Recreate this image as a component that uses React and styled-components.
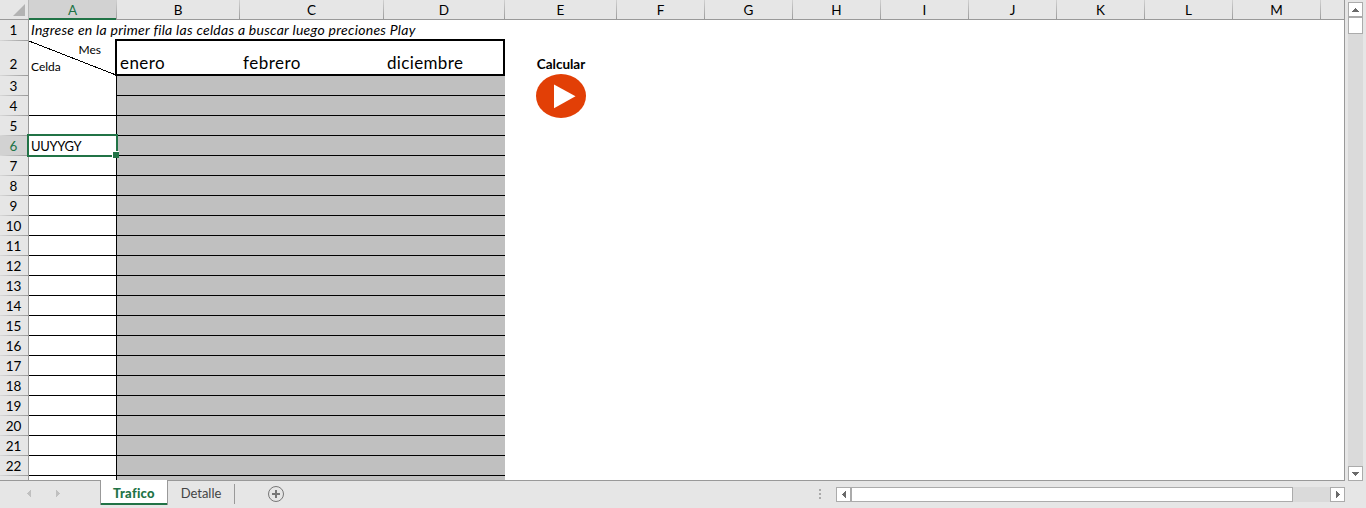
import React from 'react';
import styled, { createGlobalStyle, css } from 'styled-components';

const Global = createGlobalStyle`
  * { box-sizing: border-box; }
  body { margin: 0; background: #e6e6e6; overflow: hidden; }
`;

const Workbook = styled.div`
  display: grid;
  grid-template: 481px 27px / 1345px 21px;
  width: 1366px;
  height: 508px;
  background: #e6e6e6;
  font: 13.5px Lato, Carlito, "Open Sans", sans-serif;
  font-variant-ligatures: none;
  color: #000;
`;

const Sheet = styled.main`
  overflow: hidden;
  background: #fff;
  border-right: 1px solid #999;
  border-bottom: 1px solid #999;
`;

const HeaderRow = styled.div`
  display: flex;
  height: 20px;
  background: #e6e6e6;
  border-bottom: 1px solid #999;
`;

const Corner = styled.div`
  width: 29px;
  height: 19px;
  padding: 4px 0 0 13px;
  border-right: 1px solid #b8b8b8;
  svg { display: block; }
`;

const ColumnHeader = styled.div`
  width: ${(p) => p.$width}px;
  height: ${(p) => (p.$active ? 20 : 19)}px;
  flex: none;
  text-align: center;
  line-height: 20px;
  border-right: 1px solid;
  border-image: linear-gradient(#d4d4d4, #999) 1;
  ${(p) => p.$active && css`
    background: linear-gradient(#217346, #217346) bottom / 100% 2px no-repeat #d2d2d2;
    color: #217346;
  `}
`;

const Row = styled.div`
  display: flex;
  height: ${(p) => p.$height}px;
`;

const RowHeader = styled.div`
  width: 29px;
  flex: none;
  display: flex;
  align-items: flex-end;
  justify-content: center;
  padding: 0 1px ${(p) => p.$bottom || 1}px 0;
  line-height: 18px;
  background: linear-gradient(90deg, #d8d8d8, #999) bottom / 100% 1px no-repeat ${(p) => (p.$active ? '#d2d2d2' : '#e6e6e6')};
  color: ${(p) => (p.$active ? '#217346' : '#000')};
  border-right: 1px solid #999;
`;

const Note = styled.div`
  padding-left: 2px;
  line-height: 19px;
  font-style: italic;
  font-size: 14px;
  letter-spacing: 0.28px;
  white-space: nowrap;
`;

const KeyCell = styled.div`
  position: relative;
  width: 88px;
  flex: none;
  padding-left: 2px;
  line-height: 21px;
  font-size: 13px;
  letter-spacing: -0.35px;
  border-right: 1px solid #000;
  border-bottom: ${(p) => (p.$open ? 0 : 1)}px solid #000;
`;

const ShadedCell = styled.div`
  width: 388px;
  background: #c0c0c0;
  border-bottom: 1px solid #000;
`;

const SplitCell = styled.div`
  position: relative;
  width: 86px;
  flex: none;
  font-size: 12px;
  line-height: 17px;
  padding: 0 14px 0 2px;
  svg { position: absolute; left: 0; top: 0; }
`;

const SplitLabel = styled.div`
  text-align: ${(p) => p.$align};
`;

const MonthBand = styled.div`
  display: flex;
  align-items: flex-end;
  width: 390px;
  height: 37px;
  margin-top: -2px;
  flex: none;
  border: 2px solid #000;
  background: #fff;
`;

const Month = styled.div`
  width: ${(p) => p.$width}px;
  padding: 0 0 1px 3px;
  font-size: 17px;
  line-height: 20px;
  letter-spacing: ${(p) => p.$spacing}px;
`;

const ActionCell = styled.div`
  position: relative;
  width: 112px;
  text-align: center;
  font-weight: 700;
  font-size: 13.5px;
  line-height: 18px;
  padding-top: 14px;
  svg { position: absolute; left: 31px; top: 33px; }
`;

const Selection = styled.div`
  position: absolute;
  left: -2px;
  top: -2px;
  width: 91px;
  height: 23px;
  border: 2px solid #217346;
  z-index: 2;
  &::after {
    content: '';
    position: absolute;
    right: -3px;
    bottom: -3px;
    width: 6px;
    height: 6px;
    background: #217346;
    border: solid #fff;
    border-width: 1px 0 0 1px;
  }
`;

const VerticalScroll = styled.aside`
  display: flex;
  flex-direction: column;
  width: 15px;
  height: 479px;
  margin: 2px 0 0 3px;
  background: #dadada;
`;

const ScrollButton = styled.button`
  display: grid;
  place-items: center;
  flex: none;
  width: 15px;
  height: 15px;
  padding: 0;
  background: #fff;
  border: 1px solid #ababab;
`;

const VerticalThumb = styled.div`
  height: 17px;
  margin-bottom: auto;
  background: #fff;
  border: 1px solid #ababab;
  flex: none;
`;

const Footer = styled.footer`
  grid-column: 1 / -1;
  display: flex;
  height: 27px;
`;

const SheetNav = styled.div`
  display: flex;
  width: 100px;
  padding: 9px 0 0 27px;
  gap: 25px;
`;

const Tab = styled.div`
  width: ${(p) => (p.$active ? 68 : 67)}px;
  height: ${(p) => (p.$active ? 25 : 20)}px;
  font-size: 13px;
  text-align: center;
  color: #444;
  ${(p) => p.$active ? css`
    margin-top: -1px;
    line-height: 27px;
    background: #fff;
    color: #217346;
    font-weight: 900;
    letter-spacing: 0.3px;
    border: solid #999;
    border-width: 0 1px;
    box-shadow: inset 0 -2px #217346;
  ` : css`
    margin-top: 3px;
    line-height: 19px;
    border-right: 1px solid #999;
  `}
`;

const AddSheet = styled.div`
  width: 18px;
  margin: 4px 0 0 32px;
`;

const Splitter = styled.div`
  display: flex;
  flex-direction: column;
  gap: 2px;
  margin: 8px 15px 0 auto;
`;

const Dot = styled.i`
  width: 2px;
  height: 2px;
  background: #aaa;
`;

const HorizontalScroll = styled.div`
  display: flex;
  width: 509px;
  height: 15px;
  margin: 6px 21px 0 0;
  background: #dadada;
  justify-content: space-between;
`;

const HorizontalThumb = styled.div`
  width: 442px;
  margin: 0 auto 0 0;
  background: #fff;
  border: 1px solid #ababab;
`;

const arrowShapes = {
  up: [7, 4, 'M3 0h1v1h1v1h1v1h1v1H0V3h1V2h1V1h1z'],
  down: [7, 4, 'M0 0h7v1H6v1H5v1H4v1H3V3H2V2H1V1H0z'],
  left: [4, 7, 'M4 0v7H3V6H2V5H1V4H0V3h1V2h1V1h1V0z'],
  right: [4, 7, 'M0 0v7h1V6h1V5h1V4h1V3H3V2H2V1H1V0z'],
};

function Arrow({ dir, color = '#6a6a6a' }) {
  const [w, h, d] = arrowShapes[dir];
  return <svg width={w} height={h} viewBox={`0 0 ${w} ${h}`}><path d={d} fill={color} /></svg>;
}

const columns = [
  ['A', 88], ['B', 123], ['C', 144], ['D', 121], ['E', 112], ['F', 88], ['G', 88],
  ['H', 88], ['I', 88], ['J', 88], ['K', 88], ['L', 88], ['M', 88],
];
const dataRows = Array.from({ length: 20 }, (_, i) => i + 3);

export default function App() {
  return (
    <>
      <Global />
      <Workbook>
        <Sheet>
          <HeaderRow>
            <Corner>
              <svg width="12" height="12"><path d="M12 0v12H0z" fill="#b3b3b3" /></svg>
            </Corner>
            {columns.map(([name, width]) => (
              <ColumnHeader key={name} $width={width} $active={name === 'A'}>{name}</ColumnHeader>
            ))}
          </HeaderRow>
          <Row $height={21}>
            <RowHeader $bottom={2}>1</RowHeader>
            <Note>Ingrese en la primer fila las celdas a buscar luego preciones Play</Note>
          </Row>
          <Row $height={35}>
            <RowHeader $bottom={3}>2</RowHeader>
            <SplitCell>
              <svg width="87" height="35"><path d="M0 0L87 34" stroke="#000" shapeRendering="crispEdges" /></svg>
              <SplitLabel $align="right">Mes</SplitLabel>
              <SplitLabel $align="left">Celda</SplitLabel>
            </SplitCell>
            <MonthBand>
              <Month $width={123} $spacing={0.4}>enero</Month>
              <Month $width={144} $spacing={0.5}>febrero</Month>
              <Month $width={119} $spacing={0.35}>diciembre</Month>
            </MonthBand>
            <ActionCell>
              Calcular
              <svg width="50" height="44" viewBox="0 0 50 44">
                <ellipse cx="25" cy="22" rx="25" ry="22" fill="#e23f06" />
                <path d="M18 10.5L39.5 22.3L18 34.2z" fill="#fff" />
              </svg>
            </ActionCell>
          </Row>
          {dataRows.map((n) => (
            <Row key={n} $height={20}>
              <RowHeader $active={n === 6}>{n}</RowHeader>
              <KeyCell $open={n === 3}>
                {n === 6 && <>UUYYGY<Selection /></>}
              </KeyCell>
              <ShadedCell />
            </Row>
          ))}
          <Row $height={20}>
            <RowHeader />
            <KeyCell />
            <ShadedCell />
          </Row>
        </Sheet>
        <VerticalScroll>
          <ScrollButton><Arrow dir="up" /></ScrollButton>
          <VerticalThumb />
          <ScrollButton><Arrow dir="down" /></ScrollButton>
        </VerticalScroll>
        <Footer>
          <SheetNav>
            <Arrow dir="left" color="#c0c0c0" />
            <Arrow dir="right" color="#c0c0c0" />
          </SheetNav>
          <Tab $active>Trafico</Tab>
          <Tab>Detalle</Tab>
          <AddSheet>
            <svg width="18" height="18" fill="none" stroke="#777">
              <circle cx="9" cy="9" r="7.5" />
              <path d="M9 5v8M5 9h8" strokeWidth="2" />
            </svg>
          </AddSheet>
          <Splitter><Dot /><Dot /><Dot /></Splitter>
          <HorizontalScroll>
            <ScrollButton><Arrow dir="left" /></ScrollButton>
            <HorizontalThumb />
            <ScrollButton><Arrow dir="right" /></ScrollButton>
          </HorizontalScroll>
        </Footer>
      </Workbook>
    </>
  );
}
